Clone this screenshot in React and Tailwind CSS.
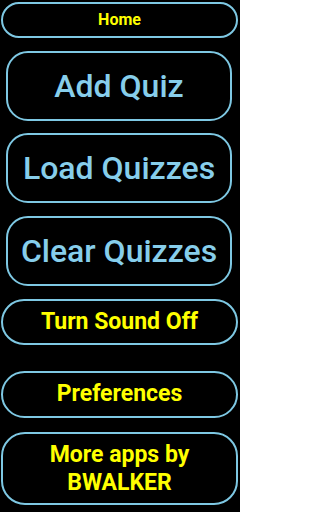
import React from "react";

const font = { fontFamily: "Roboto, 'Noto Sans', sans-serif" };

function BigButton({ label, className }) {
  return (
    <button
      className={`mx-[6px] w-[226px] h-[70px] border-2 border-[#7ec8e3] rounded-[22px] flex items-center justify-center text-[32px] font-medium text-[#87ceeb] ${className}`}
    >
      {label}
    </button>
  );
}

function YellowButton({ label, className }) {
  return (
    <button
      className={`mx-[1px] w-[237px] border-2 border-[#7ec8e3] rounded-[24px] flex flex-col items-center justify-center font-bold text-[#ffff00] ${className}`}
    >
      {label}
    </button>
  );
}

export default function App() {
  return (
    <div className="w-[240px] h-[512px] bg-black flex flex-col overflow-hidden" style={font}>
      <YellowButton label="Home" className="mt-[2px] h-[36px] text-[16px] rounded-[18px]" />
      <BigButton label="Add Quiz" className="mt-[13px]" />
      <BigButton label="Load Quizzes" className="mt-[12px]" />
      <BigButton label="Clear Quizzes" className="mt-[13px]" />
      <YellowButton label="Turn Sound Off" className="mt-[13px] h-[46px] text-[23px]" />
      <YellowButton label="Preferences" className="mt-[26px] h-[47px] text-[23px]" />
      <YellowButton
        label={
          <>
            <span className="leading-[28px]">More apps by</span>
            <span className="leading-[28px]">BWALKER</span>
          </>
        }
        className="mt-[14px] h-[73px] text-[23px]"
      />
    </div>
  );
}
